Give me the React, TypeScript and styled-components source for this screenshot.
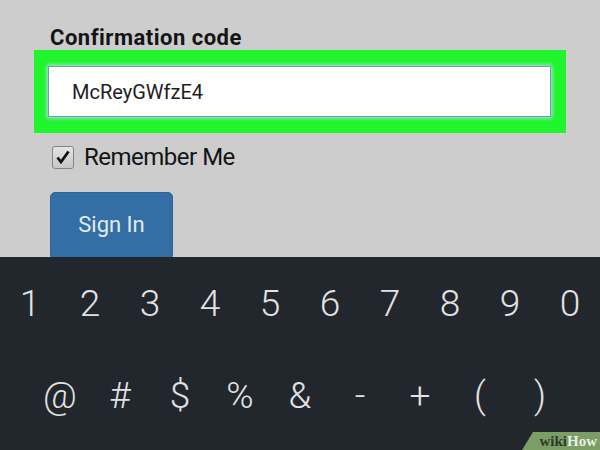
import styled, { createGlobalStyle } from "styled-components";

const Global = createGlobalStyle`
    body {
        margin: 0;
        background: #cdcdcd;
        font-family: Roboto, "Liberation Sans", sans-serif;
    }
`;

const Screen = styled.div`
    width: 600px;
    height: 450px;
    display: flex;
    flex-direction: column;
    overflow: hidden;
    position: relative;
`;

const Form = styled.div`
    height: 257px;
    flex-shrink: 0;
    box-sizing: border-box;
    padding: 26px 34px 0 34px;
    background: #cdcdcd;
    overflow: hidden;
    display: flex;
    flex-direction: column;
`;

const Label = styled.div`
    padding-left: 16px;
    font-size: 22px;
    letter-spacing: 0.5px;
    font-weight: bold;
    color: #141414;
    line-height: 24px;
`;

const Highlight = styled.div`
    background: #1ff42d;
    padding: 16px 15px 16px 14px;
`;

const Input = styled.div`
    height: 51px;
    box-sizing: border-box;
    background: #fff;
    border: 1px solid #6c9bcc;
    box-shadow: 0 0 4px 1px #bfe0f0;
    display: flex;
    align-items: center;
    padding-left: 23px;
    font-size: 20px;
    color: #1e1e1e;
`;

const CheckRow = styled.label`
    display: flex;
    align-items: center;
    gap: 10px;
    margin-top: 10px;
    padding-left: 18px;
    font-size: 24px;
    letter-spacing: -0.5px;
    line-height: 28px;
    color: #141414;
`;

const Box = styled.span`
    width: 22px;
    height: 23px;
    box-sizing: border-box;
    border: 1px solid #858585;
    border-radius: 3px;
    background: linear-gradient(#e4e4e4, #c6c6c6);
    display: flex;
    align-items: center;
    justify-content: center;
`;

const Button = styled.div`
    margin-top: 21px;
    margin-left: 16px;
    width: 123px;
    height: 68px;
    flex-shrink: 0;
    box-sizing: border-box;
    padding-bottom: 3px;
    background: #336ea4;
    border: 1px solid #2e6596;
    border-radius: 5px;
    color: #e4ecf3;
    font-size: 22px;
    display: flex;
    align-items: center;
    justify-content: center;
`;

const Keyboard = styled.div`
    flex: 1;
    background: #21272d;
    display: flex;
    flex-direction: column;
`;

const KeyRow = styled.div<{ $inset: number }>`
    height: 92px;
    display: flex;
    padding: 0 ${(p) => p.$inset}px;
`;

const Key = styled.div`
    width: 60px;
    display: flex;
    align-items: center;
    justify-content: center;
    font-size: 37px;
    font-weight: 300;
    color: #e2e2e2;
`;

const Badge = styled.div`
    position: absolute;
    right: 0;
    bottom: 0;
    width: 78px;
    height: 18px;
    background: #7b9e66;
    clip-path: polygon(11px 0, 100% 0, 100% 100%, 0 100%);
    display: flex;
    align-items: center;
    justify-content: flex-end;
    padding-right: 3px;
    box-sizing: border-box;
    font-family: "Liberation Serif", serif;
    font-weight: bold;
    font-size: 15px;
    color: #2e3a28;
    span {
        color: #e8eee2;
    }
`;

const digits = ["1", "2", "3", "4", "5", "6", "7", "8", "9", "0"];
const symbols = ["@", "#", "$", "%", "&", "-", "+", "(", ")"];

const App = () => {
    return (
        <Screen>
            <Global />
            <Form>
                <Label>Confirmation code</Label>
                <Highlight>
                    <Input>McReyGWfzE4</Input>
                </Highlight>
                <CheckRow>
                    <Box>
                        <svg width="16" height="16" viewBox="0 0 16 16">
                            <path d="M2.5 8.5 L6 13 L13.5 2.5" fill="none" stroke="#111" strokeWidth="2.8" />
                        </svg>
                    </Box>
                    Remember Me
                </CheckRow>
                <Button>Sign In</Button>
            </Form>
            <Keyboard>
                <KeyRow $inset={0}>
                    {digits.map((d) => (
                        <Key key={d}>{d}</Key>
                    ))}
                </KeyRow>
                <KeyRow $inset={30}>
                    {symbols.map((s) => (
                        <Key key={s}>{s}</Key>
                    ))}
                </KeyRow>
            </Keyboard>
            <Badge>
                wiki<span>How</span>
            </Badge>
        </Screen>
    );
};

export default App;
